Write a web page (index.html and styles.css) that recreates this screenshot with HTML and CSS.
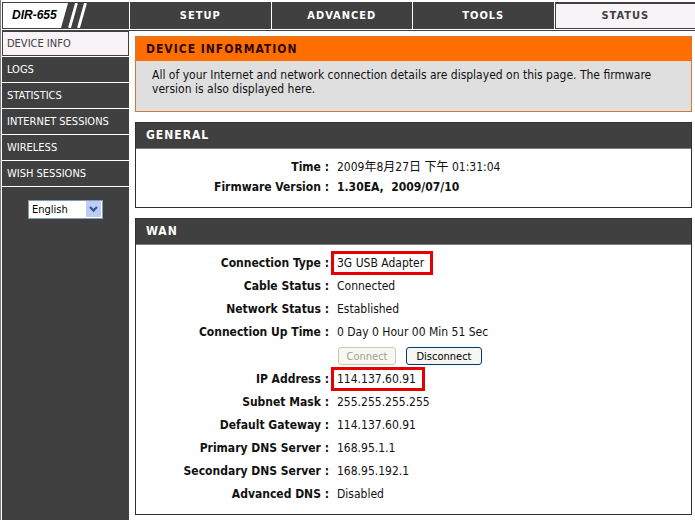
FILE: index.html
```
<!DOCTYPE html>
<html lang="en">
    <head>
        <meta charset="utf-8" />
        <title>DIR-655 | Device Info</title>
        <link rel="stylesheet" href="styles.css">
    </head>

    <body>
        <nav class="topnav">
            <a class="brand" href="#">
                <span class="model">DIR-655</span>
                <svg class="stripes" width="30" height="25" viewBox="0 0 30 25">
                    <polygon points="0,0 8,0 1,25 0,25" fill="#fff"/>
                    <path d="M16.5 0 L9.5 25 M25.5 0 L18.5 25" stroke="#fff" stroke-width="2.8"/>
                </svg>
            </a>
            <a class="tab" href="#">SETUP</a>
            <a class="tab" href="#">ADVANCED</a>
            <a class="tab" href="#">TOOLS</a>
            <a class="tab active" href="#">STATUS</a>
        </nav>

        <div class="page">
            <div class="sidebar">
                <a class="item active" href="#">DEVICE INFO</a>
                <a class="item" href="#">LOGS</a>
                <a class="item" href="#">STATISTICS</a>
                <a class="item" href="#">INTERNET SESSIONS</a>
                <a class="item" href="#">WIRELESS</a>
                <a class="item" href="#">WISH SESSIONS</a>
                <div class="language">
                    <select name="language" aria-label="Language">
                        <option>English</option>
                    </select>
                    <svg class="arrow" width="15" height="16" viewBox="0 0 15 16">
                        <rect width="15" height="16" rx="1" fill="#bccdf6"/>
                        <path d="M4 6 L7.5 9.5 L11 6" fill="none" stroke="#3f5688" stroke-width="2.4"/>
                    </svg>
                </div>
            </div>

            <div class="content">
                <div class="box intro">
                    <h1>DEVICE INFORMATION</h1>
                    <p>All of your Internet and network connection details are displayed on this page. The firmware version is also displayed here.</p>
                </div>

                <!-- General -->
                <div class="box">
                    <h2>GENERAL</h2>
                    <table class="general">
                        <tr>
                            <th>Time :</th>
                            <td>2009年8月27日 下午 01:31:04</td>
                        </tr>
                        <tr>
                            <th>Firmware Version :</th>
                            <td><b>1.30EA,&nbsp; 2009/07/10</b></td>
                        </tr>
                    </table>
                </div>

                <!-- WAN -->
                <div class="box">
                    <h2>WAN</h2>
                    <table class="wan">
                        <tr>
                            <th>Connection Type :</th>
                            <td><span class="marked">3G USB Adapter</span></td>
                        </tr>
                        <tr>
                            <th>Cable Status :</th>
                            <td>Connected</td>
                        </tr>
                        <tr>
                            <th>Network Status :</th>
                            <td>Established</td>
                        </tr>
                        <tr>
                            <th>Connection Up Time :</th>
                            <td>0 Day 0 Hour 00 Min 51 Sec</td>
                        </tr>
                        <tr>
                            <td></td>
                            <td>
                                <div class="buttons">
                                    <button type="button" disabled>Connect</button>
                                    <button type="button">Disconnect</button>
                                </div>
                            </td>
                        </tr>
                        <tr>
                            <th>IP Address :</th>
                            <td><span class="marked">114.137.60.91</span></td>
                        </tr>
                        <tr>
                            <th>Subnet Mask :</th>
                            <td>255.255.255.255</td>
                        </tr>
                        <tr>
                            <th>Default Gateway :</th>
                            <td>114.137.60.91</td>
                        </tr>
                        <tr>
                            <th>Primary DNS Server :</th>
                            <td>168.95.1.1</td>
                        </tr>
                        <tr>
                            <th>Secondary DNS Server :</th>
                            <td>168.95.192.1</td>
                        </tr>
                        <tr>
                            <th>Advanced DNS :</th>
                            <td>Disabled</td>
                        </tr>
                    </table>
                </div>
            </div>
        </div>
    </body>
</html>
```
FILE: styles.css
```
* {
    box-sizing: border-box;
}
body {
    margin: 0;
    padding: 2px 0 0 1px;
    min-height: 100vh;
    display: flex;
    flex-direction: column;
    border-left: 1px solid #808080;
    background-color: #fff;
    color: #111;
    font-family: "DejaVu Sans Condensed", Tahoma, "Noto Sans CJK TC", sans-serif;
    font-size: 12px;
}
a {
    text-decoration: none;
}

/* top tabs */
.topnav {
    display: grid;
    grid-template-columns: 127px repeat(4, 1fr);
    column-gap: 1px;
    padding-bottom: 1px;
    border-bottom: 1px solid #404040;
}
.brand {
    display: flex;
    border: 1px solid #404040;
    background-color: #404040;
    color: #000;
}
.model {
    padding: 0 3px 0 9px;
    background-color: #fff;
    font: italic bold 12px/25px "Liberation Sans", Arial, sans-serif;
}
.stripes {
    display: block;
}
.tab {
    border: 2px solid #404040;
    background-color: #404040;
    color: #fff;
    font-size: 11px;
    font-weight: bold;
    letter-spacing: 1px;
    line-height: 23px;
    text-align: center;
}
.tab.active {
    border-width: 2px 0 1px 1px;
    background-color: #f7f3f7;
    color: #404040;
}

/* left menu */
.page {
    flex: 1;
    display: flex;
}
.sidebar {
    flex: 0 0 127px;
    background-color: #404040;
}
.item {
    display: block;
    height: 26px;
    padding-left: 5px;
    border-bottom: 1px solid #fff;
    color: #fff;
    font-size: 11px;
    line-height: 26px;
}
.item.active {
    background-color: #f7f3f7;
    box-shadow: inset 0 0 0 1px #404040;
    color: #404040;
}
.language {
    position: relative;
    width: 75px;
    margin: 13px 0 0 26px;
}
.language select {
    display: block;
    width: 100%;
    height: 19px;
    padding: 0 3px;
    border: 1px solid #7f9db9;
    border-radius: 0;
    background-color: #fff;
    color: #000;
    font-family: inherit;
    font-size: 11px;
    appearance: none;
}
.arrow {
    position: absolute;
    top: 1px;
    right: 2px;
    pointer-events: none;
}

/* boxes */
.content {
    flex: 1;
    display: flex;
    flex-direction: column;
    gap: 10px;
    padding: 5px 3px 5px 6px;
}
.box {
    border: 1px solid #303030;
}
h1,
h2 {
    margin: 0;
    padding-left: 10px;
    font-size: 12px;
    letter-spacing: 1px;
    line-height: 25px;
}
h2 {
    border-bottom: 1px solid #808080;
    background-color: #404040;
    color: #fff;
}
.box.intro {
    border-color: #d07838;
    background-color: #dfdfdf;
}
.intro h1 {
    background-color: #ff6f00;
    color: #300800;
    line-height: 24px;
}
.intro p {
    margin: 0;
    padding: 7px 16px 15px 16px;
    line-height: 14px;
}

table {
    width: 100%;
    table-layout: fixed;
    border-collapse: collapse;
}
th,
td {
    padding: 0;
    text-align: left;
}
th {
    text-align: right;
}
th:first-child,
td:first-child {
    width: 193px;
}
td:last-child {
    padding-left: 8px;
}
.general {
    margin: 8px 0 10px;
    line-height: 20px;
}
.wan {
    margin: 7px 0 8px;
    line-height: 23px;
}
.marked {
    display: inline-block;
    margin-left: -3px;
    padding: 0 6px 0 3px;
    outline: 3px solid #e60000;
    line-height: 18px;
}

.buttons {
    display: flex;
    gap: 10px;
    height: 24px;
    padding: 3px 0 3px 1px;
}
button {
    width: 76px;
    padding: 0;
    border: 1px solid #003c74;
    border-radius: 3px;
    background-color: #f6f6f2;
    color: #000;
    font-family: inherit;
    font-size: 11px;
}
button:disabled {
    width: 58px;
    border-color: #c9c7ba;
    background-color: #f8f7f1;
    color: #a1a192;
}
```
